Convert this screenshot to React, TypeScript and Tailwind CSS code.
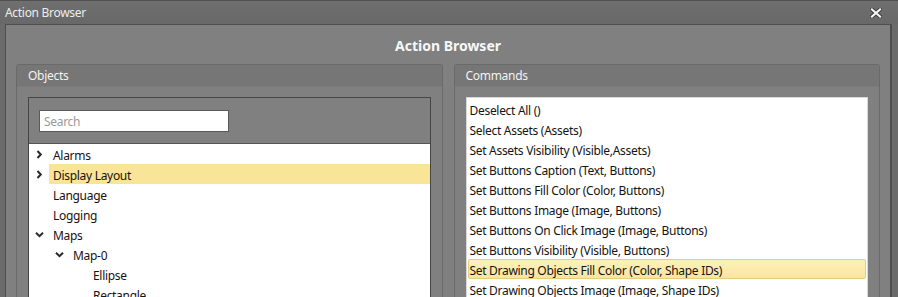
import React from 'react';

type TreeNode = {
  label: string;
  depth: number;
  chevron?: 'right' | 'down';
  selected?: boolean;
};

const TREE: TreeNode[] = [
  { label: 'Alarms', depth: 0, chevron: 'right' },
  { label: 'Display Layout', depth: 0, chevron: 'right', selected: true },
  { label: 'Language', depth: 0 },
  { label: 'Logging', depth: 0 },
  { label: 'Maps', depth: 0, chevron: 'down' },
  { label: 'Map-0', depth: 1, chevron: 'down' },
  { label: 'Ellipse', depth: 2 },
  { label: 'Rectangle', depth: 2 },
];

const COMMANDS = [
  'Deselect All ()',
  'Select Assets (Assets)',
  'Set Assets Visibility (Visible,Assets)',
  'Set Buttons Caption (Text, Buttons)',
  'Set Buttons Fill Color (Color, Buttons)',
  'Set Buttons Image (Image, Buttons)',
  'Set Buttons On Click Image (Image, Buttons)',
  'Set Buttons Visibility (Visible, Buttons)',
  'Set Drawing Objects Fill Color (Color, Shape IDs)',
  'Set Drawing Objects Image (Image, Shape IDs)',
];

const SELECTED_COMMAND = 8;

const Chevron = ({ dir }: { dir: 'right' | 'down' }) => (
  <svg width="9" height="9" viewBox="0 0 9 9" className="shrink-0">
    {dir === 'right' ? (
      <path d="M2.5 1 L5.8 4.5 L2.5 8" fill="none" stroke="#2a2a2a" strokeWidth="2" />
    ) : (
      <path d="M1 2.8 L4.5 6.2 L8 2.8" fill="none" stroke="#2a2a2a" strokeWidth="2" />
    )}
  </svg>
);

const CloseIcon = () => (
  <svg width="12" height="10" viewBox="0 0 12 10">
    <path d="M2 1.5 L10 8.5 M10 1.5 L2 8.5" stroke="#3c3c3c" strokeWidth="4" strokeLinecap="square" />
    <path d="M2 1.5 L10 8.5 M10 1.5 L2 8.5" stroke="#f4f4f4" strokeWidth="2.2" strokeLinecap="square" />
  </svg>
);

const Panel = ({ title, children }: { title: string; children: React.ReactNode }) => (
  <div className="flex-1 flex flex-col rounded-t-[3px] border border-b-0 border-[#6a6a6a] min-w-0">
    <div className="h-[22px] shrink-0 flex items-center pt-[1px] px-[11px] bg-[#767676] border-b border-[#7b7b7b] text-[12px] text-[#f2f2f2]">
      {title}
    </div>
    <div className="flex-1 px-[11px] pt-[10px] flex flex-col min-h-0">{children}</div>
  </div>
);

export default function App() {
  return (
    <div
      className="w-[898px] h-[297px] overflow-hidden flex flex-col bg-[#6b6b6b] border-t border-[#505050] tracking-[-0.3px]"
      style={{ fontFamily: '"Noto Sans", "Open Sans", sans-serif' }}
    >
      {/* window title bar */}
      <div className="h-[23px] shrink-0 flex items-center justify-between pl-[5px] pr-[16px] bg-gradient-to-b from-[#6f6f6f] to-[#686868] text-[12px] text-[#ececec]">
        <span>Action Browser</span>
        <CloseIcon />
      </div>

      <div className="flex-1 min-h-0 ml-[5px] mr-[6px] flex flex-col bg-[#808080] border border-b-0 border-[#4e4e4e] border-r-2">
        <div className="h-[39px] shrink-0 flex items-center justify-center pt-[2px] text-[14px] font-bold tracking-normal text-[#f7f7f7]">
          Action Browser
        </div>

        <div className="flex-1 min-h-0 flex gap-[11px] pl-[10px] pr-[10px]">
          <Panel title="Objects">
            <div className="flex-1 flex flex-col border border-b-0 border-[#454545]">
              <div className="h-[46px] shrink-0 flex items-start pt-[12px] px-[10px] border-b border-[#555]">
                <div className="w-[190px] h-[22px] bg-white border border-[#5a5a5a] flex items-center pt-[2px] px-[4px] text-[12px] text-[#9a9a9a]">
                  Search
                </div>
              </div>
              <div className="flex-1 bg-white text-[12px] text-[#1c1010]">
                {TREE.map(n => (
                  <div key={n.label} className="h-[20px] flex items-center">
                    <div
                      className="flex items-center shrink-0"
                      style={{ width: 20 + n.depth * 20, paddingLeft: 6 + n.depth * 20 }}
                    >
                      {n.chevron && <Chevron dir={n.chevron} />}
                    </div>
                    <div
                      className={
                        n.selected
                          ? 'flex-1 h-full flex items-center pt-[3px] pl-[4px] bg-[#f8e597]'
                          : 'flex-1 h-full flex items-center pt-[3px] pl-[4px]'
                      }
                    >
                      {n.label}
                    </div>
                  </div>
                ))}
              </div>
            </div>
          </Panel>

          <Panel title="Commands">
            <div className="flex-1 bg-white border border-b-0 border-[#d8d8d8] pt-[1px] px-[1px] text-[12px] text-[#141414]">
              {COMMANDS.map((c, i) => (
                <div
                  key={c}
                  className={
                    i === SELECTED_COMMAND
                      ? 'h-[20px] flex items-center pt-[3px] pl-[1px] rounded-[2px] border border-[#e6cf7a] bg-gradient-to-b from-[#fdf1bd] to-[#fbe59c]'
                      : 'h-[20px] flex items-center pt-[3px] pl-[2px]'
                  }
                >
                  {c}
                </div>
              ))}
            </div>
          </Panel>
        </div>
      </div>
    </div>
  );
}
